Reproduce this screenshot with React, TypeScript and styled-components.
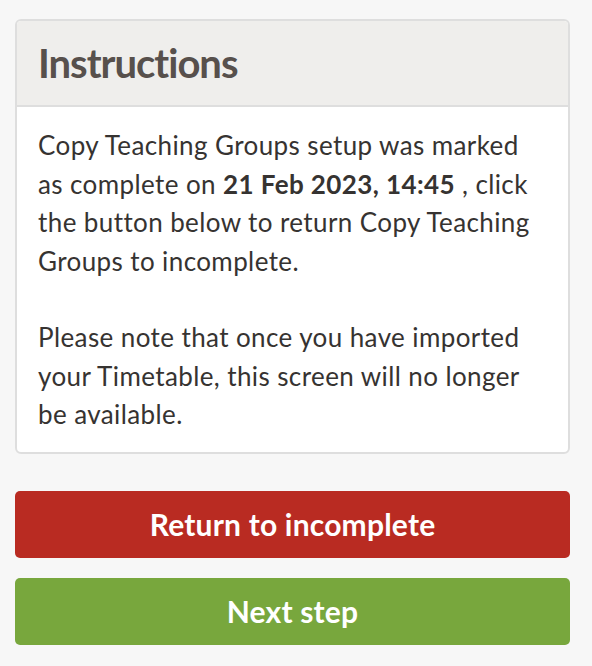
import { createGlobalStyle, styled } from "styled-components";

const GlobalStyle = createGlobalStyle`
  html, body {
    margin: 0;
    padding: 0;
    background: #f7f7f7;
  }
  body {
    font-family: Lato, "Open Sans", sans-serif;
    color: #333;
  }
`;

const Page = styled.div`
  display: flex;
  flex-direction: column;
  padding: 19px 22px 0 15px;
`;

const Panel = styled.section`
  background: #fff;
  border: 2px solid #dedede;
  border-radius: 6px;
  overflow: hidden;
`;

const PanelHeader = styled.header`
  background: #efeeec;
  border-bottom: 2px solid #dedede;
  height: 84px;
  display: flex;
  align-items: center;
  padding: 0 21px;
`;

const Title = styled.h2`
  margin: 0;
  font-size: 40px;
  font-weight: 700;
  letter-spacing: -1px;
  color: #57504c;
`;

const PanelBody = styled.div`
  padding: 19px 21px 18px;
`;

const Para = styled.p`
  margin: 0 0 38px;
  font-size: 26px;
  line-height: 38.5px;
  letter-spacing: 0.4px;
  color: #363331;
  &:last-child {
    margin-bottom: 0;
  }
`;

const Actions = styled.div`
  display: flex;
  flex-direction: column;
  gap: 20px;
  margin-top: 37px;
`;

const ActionButton = styled.button<{ $tone: "danger" | "success" }>`
  height: 67px;
  width: 100%;
  border: none;
  border-radius: 5px;
  background: ${(p) => (p.$tone === "danger" ? "#b92b22" : "#78a73d")};
  color: #fff;
  font-family: inherit;
  font-size: 30px;
  font-weight: 700;
  letter-spacing: 0.2px;
  cursor: pointer;
`;

export default function App() {
  return (
    <>
      <GlobalStyle />
      <Page>
        <Panel>
          <PanelHeader>
            <Title>Instructions</Title>
          </PanelHeader>
          <PanelBody>
            <Para>
              Copy Teaching Groups setup was marked as complete on{" "}
              <strong>21 Feb 2023, 14:45</strong> , click the button below to
              return Copy Teaching Groups to incomplete.
            </Para>
            <Para>
              Please note that once you have imported your Timetable, this
              screen will no longer be available.
            </Para>
          </PanelBody>
        </Panel>
        <Actions>
          <ActionButton $tone="danger">Return to incomplete</ActionButton>
          <ActionButton $tone="success">Next step</ActionButton>
        </Actions>
      </Page>
    </>
  );
}
